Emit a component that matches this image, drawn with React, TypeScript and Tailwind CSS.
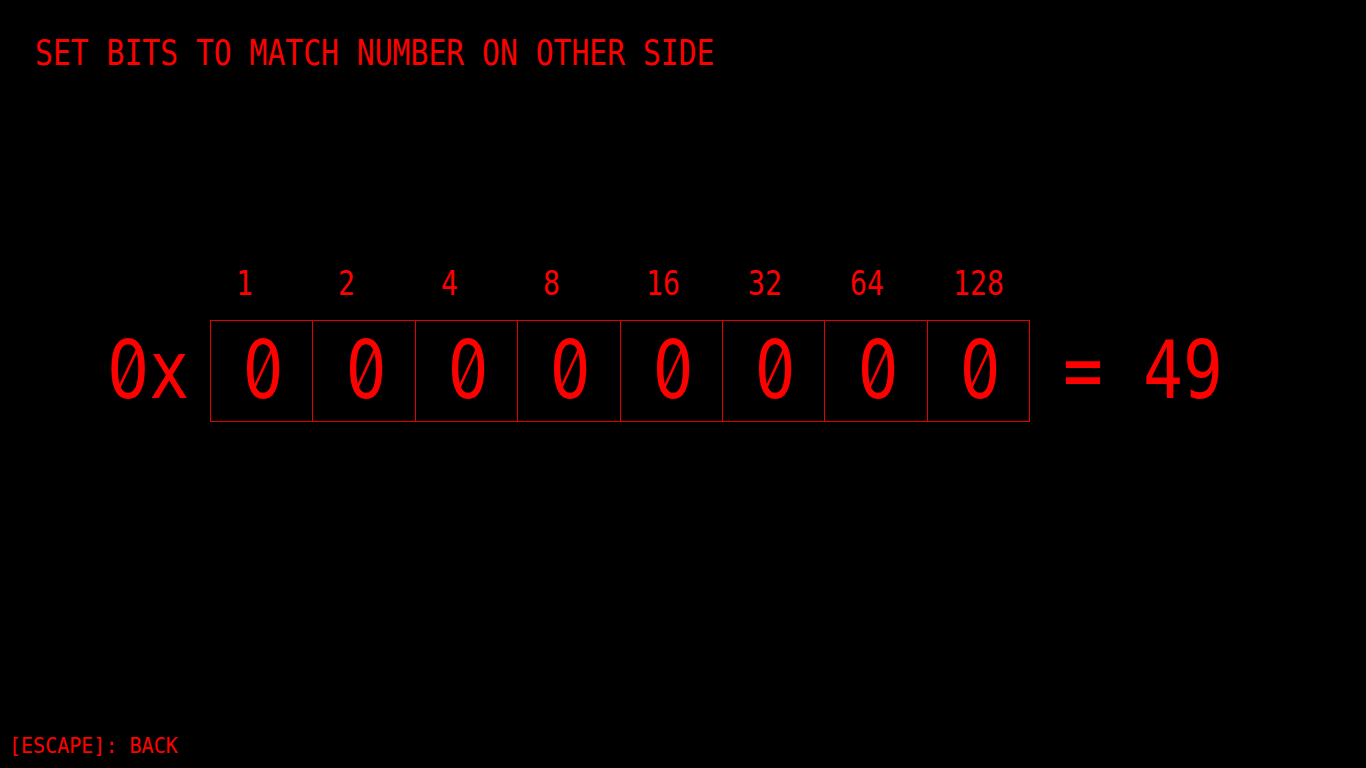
import React from 'react';

const bits = [1, 2, 4, 8, 16, 32, 64, 128];

// plain zero with a thin slash laid over it, like the reference font
const Zero = () => (
    <span className="relative inline-block font-['DejaVu_Sans',sans-serif]">
        0
        <span className="absolute left-1/2 top-[48%] w-[2.5px] h-[44px] -translate-x-1/2 -translate-y-1/2 rotate-[30deg] bg-[#f00]" />
    </span>
);

export default function App() {
    const target = 49;
    const values = bits.map(() => 0);

    return (
        <div className="w-full h-screen bg-black text-[#f00] font-['DejaVu_Sans_Mono',monospace] flex flex-col overflow-hidden">
            {/* Title */}
            <div className="pt-[35px] pl-[35px] text-[36px] leading-none whitespace-nowrap">
                <span className="inline-block origin-left scale-x-[0.825]">SET BITS TO MATCH NUMBER ON OTHER SIDE</span>
            </div>

            {/* Bit weights */}
            <div className="mt-[195px] pl-[210px] flex">
                {bits.map(b => (
                    <div key={b} className="w-[102.4px] pl-[26px] text-[34px] leading-none whitespace-nowrap">
                        <span className="inline-block origin-left scale-x-[0.83]">{b}</span>
                    </div>
                ))}
            </div>

            {/* Bits row */}
            <div className="mt-[20px] pl-[107px] flex items-center">
                <div className="w-[103px] text-[80px] leading-none whitespace-nowrap">
                    <span className="inline-block origin-left scale-x-[0.83]"><Zero />x</span>
                </div>
                <div className="flex border-y border-r border-[#e00000]">
                    {values.map((v, i) => (
                        <div key={i} className="w-[102.4px] h-[100px] border-l border-[#e00000] flex items-center justify-center text-[80px] leading-none">
                            <span className="inline-block pl-[4px] scale-x-[0.8]">{v === 0 ? <Zero /> : v}</span>
                        </div>
                    ))}
                </div>
                <div className="ml-[33px] text-[80px] leading-none whitespace-nowrap">
                    <span className="inline-block origin-left scale-x-[0.83]">= {target}</span>
                </div>
            </div>

            <div className="flex-1" />

            {/* Footer hint */}
            <div className="pl-[9px] pb-[11px] text-[22px] leading-none whitespace-nowrap">
                <span className="inline-block origin-left scale-x-[0.91]">[ESCAPE]: BACK</span>
            </div>
        </div>
    );
}
